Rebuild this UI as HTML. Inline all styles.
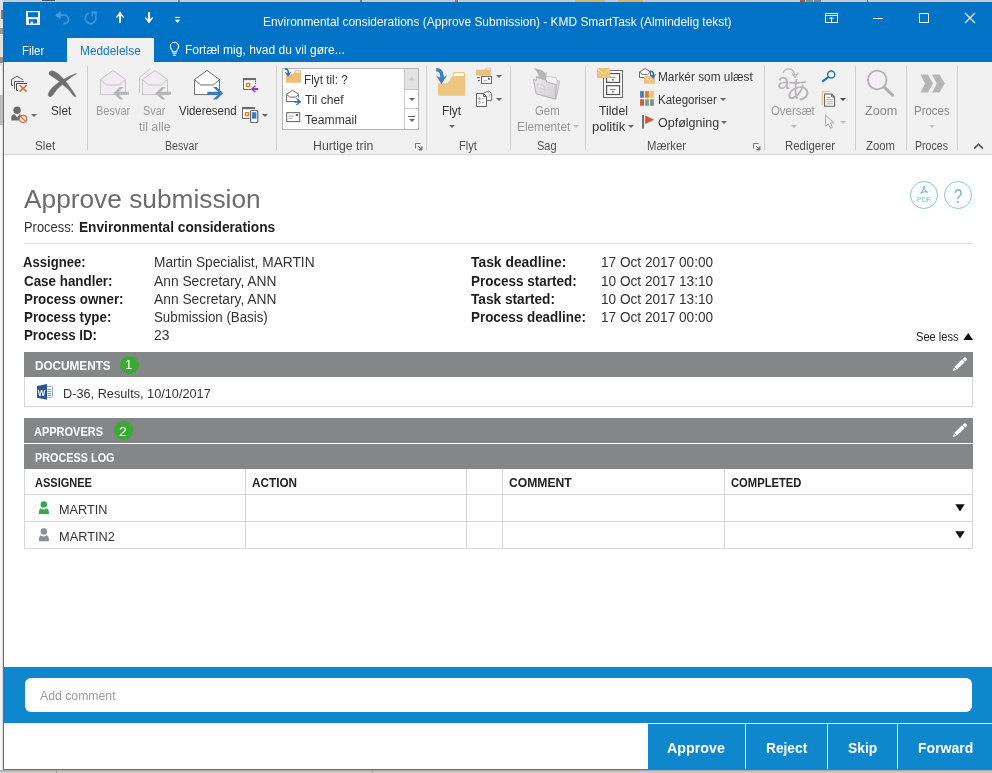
<!DOCTYPE html>
<html lang="en">
<head>
<meta charset="utf-8">
<title>Environmental considerations (Approve Submission) - KMD SmartTask</title>
<style>
*{box-sizing:border-box;margin:0;padding:0}
html,body{width:992px;height:773px;overflow:hidden;background:#d6d6d6}
body{position:relative;font-family:"Liberation Sans",sans-serif;font-size:12px;color:#222}
.a{position:absolute}
svg{position:absolute;overflow:visible}
.t{position:absolute;white-space:nowrap;line-height:1;transform-origin:0 0}
.sep{position:absolute;top:66px;width:1px;height:84px;background:#d0d0d0}
.bar{position:absolute;left:24px;width:949px;background:#858688}
.vl{position:absolute;width:1px;background:#d6d6d6}
.hl{position:absolute;height:1px;background:#d6d6d6}
.dd{position:absolute;width:0;height:0;border-left:3px solid transparent;border-right:3px solid transparent;border-top:3px solid #666}
.dd.l{border-top-color:#bdbdbd}
</style>
</head>
<body>
<div id="root" style="position:absolute;left:0;top:0;width:992px;height:773px;will-change:transform">
<!-- desktop behind window -->
<div class="a" style="left:0;top:0;width:992px;height:2px;background:#cbc9c9"></div>
<div class="a" style="left:42px;top:0;width:13px;height:1px;background:#555"></div>
<div class="a" style="left:178px;top:0;width:2px;height:2px;background:#888"></div>
<div class="a" style="left:360px;top:0;width:2px;height:2px;background:#777"></div>
<div class="a" style="left:455px;top:0;width:3px;height:2px;background:#c46a3a"></div>
<div class="a" style="left:575px;top:0;width:30px;height:2px;background:#d9b46a"></div>
<div class="a" style="left:618px;top:0;width:25px;height:2px;background:#d9b46a"></div>
<div class="a" style="left:800px;top:0;width:5px;height:2px;background:#b8522e"></div>
<div class="a" style="left:806px;top:0;width:7px;height:2px;background:#6f9a86"></div>
<div class="a" style="left:814px;top:0;width:7px;height:2px;background:#858585"></div>
<div class="a" style="left:867px;top:0;width:1px;height:2px;background:#555"></div>
<div class="a" style="left:0;top:770px;width:992px;height:3px;background:linear-gradient(#a4a4a4,#c2c2c2 55%,#d2d2d2)"></div>
<div class="a" style="left:0;top:0;width:3px;height:66px;background:#e0e0e0"></div>
<div class="a" style="left:0;top:66px;width:3px;height:704px;background:linear-gradient(to right,#f6f6f6 50%,#cdcdcd)"></div>
<div class="a" style="left:0;top:95px;width:3px;height:30px;background:#bdbdbd"></div>
<div class="a" style="left:1px;top:10px;width:2px;height:9px;background:#7a7a7a"></div>
<div class="a" style="left:0;top:28px;width:3px;height:6px;background:#9a9a9a"></div>
<div class="a" style="left:0;top:57px;width:3px;height:6px;background:#909090"></div>
<div class="a" style="left:56px;top:770px;width:1px;height:3px;background:#9c9c9c"></div>
<div class="a" style="left:372px;top:770px;width:1px;height:3px;background:#9c9c9c"></div>
<!-- window -->
<div class="a" style="left:3px;top:2px;width:989px;height:768px;background:#fff;border-left:1px solid #1883d7;border-bottom:1px solid #1883d7"></div>
<div class="a" style="left:3px;top:2px;width:989px;height:60px;background:#0173c7"></div>
<div class="a" style="left:67px;top:38px;width:87px;height:25px;background:#f1f1f1"></div>
<div class="a" style="left:4px;top:62px;width:988px;height:93px;background:#f1f1f1;border-bottom:1px solid #d4d4d4"></div>
<!-- ribbon separators -->
<div class="sep" style="left:87px"></div>
<div class="sep" style="left:276px"></div>
<div class="sep" style="left:426px"></div>
<div class="sep" style="left:510px"></div>
<div class="sep" style="left:585px"></div>
<div class="sep" style="left:764px"></div>
<div class="sep" style="left:855px"></div>
<div class="sep" style="left:906px"></div>
<div class="sep" style="left:957px"></div>
<!-- quick steps gallery -->
<div class="a" style="left:282px;top:68px;width:137px;height:62px;background:#fff;border:1px solid #b4b4b4"></div>
<div class="a" style="left:404px;top:69px;width:14px;height:21px;background:#e3e3e3;border-left:1px solid #c8c8c8;border-bottom:1px solid #c8c8c8"></div>
<div class="a" style="left:404px;top:90px;width:14px;height:19px;border-left:1px solid #c8c8c8;border-bottom:1px solid #c8c8c8"></div>
<div class="a" style="left:404px;top:109px;width:14px;height:20px;border-left:1px solid #c8c8c8"></div>
<!-- content -->
<div class="hl" style="left:24px;top:243px;width:949px;background:#dddddd"></div>
<div class="bar" style="top:352px;height:25px"></div>
<div class="a" style="left:24px;top:377px;width:949px;height:30px;border:1px solid #d6d6d6;border-top:none"></div>
<div class="bar" style="top:418px;height:25px"></div>
<div class="bar" style="top:444px;height:25px"></div>
<!-- table grid -->
<div class="hl" style="left:24px;top:494px;width:949px"></div>
<div class="hl" style="left:24px;top:521px;width:949px"></div>
<div class="hl" style="left:24px;top:548px;width:949px"></div>
<div class="vl" style="left:24px;top:469px;height:80px"></div>
<div class="vl" style="left:245px;top:469px;height:80px"></div>
<div class="vl" style="left:466px;top:469px;height:80px"></div>
<div class="vl" style="left:502px;top:469px;height:80px"></div>
<div class="vl" style="left:724px;top:469px;height:80px"></div>
<div class="vl" style="left:972px;top:469px;height:80px"></div>
<!-- badges -->
<div class="a" style="left:120.200px;top:355.800px;width:18.500px;height:18.500px;border-radius:50%;background:#3aaa35"></div>
<div class="a" style="left:114px;top:421.300px;width:18.500px;height:18.500px;border-radius:50%;background:#3aaa35"></div>
<!-- bottom -->
<div class="a" style="left:4px;top:667px;width:988px;height:102px;background:#0f87cd"></div>
<div class="a" style="left:25px;top:678px;width:947px;height:34px;background:#fff;border-radius:6px"></div>
<div class="a" style="left:4px;top:723px;width:644px;height:46px;background:#fff"></div>
<div class="a" style="left:648px;top:723px;width:344px;height:1px;background:#fff"></div>
<div class="a" style="left:745px;top:723px;width:1px;height:46px;background:#fff"></div>
<div class="a" style="left:827px;top:723px;width:1px;height:46px;background:#fff"></div>
<div class="a" style="left:897px;top:723px;width:1px;height:46px;background:#fff"></div>

<!-- icons -->
<!-- title bar icons -->
<svg style="left:26px;top:11px" width="14" height="14" viewBox="26 11 14 14"><rect x="26" y="11" width="14" height="13.900" fill="#fff"/><rect x="28" y="12.200" width="10" height="5" fill="#0173c7"/><rect x="28.800" y="19.200" width="8.400" height="4.300" fill="#0173c7"/><rect x="30.600" y="21.600" width="2.300" height="2" fill="#fff"/></svg>
<svg style="left:54px;top:10px" width="16" height="15" viewBox="0 0 16 15"><path d="M2 5.2H10.2a4.2 4.2 0 0 1 0 8.4H9.2" fill="none" stroke="#4398de" stroke-width="1.8"/><path d="M.9 5.2L6.6 1v8.4z" fill="#4398de"/></svg>
<svg style="left:84px;top:10px" width="14" height="15" viewBox="0 0 14 15"><path d="M5 3.2A5.3 5.3 0 1 0 11.2 5.6" fill="none" stroke="#3d94dc" stroke-width="1.8"/><path d="M7.6 1.2h5.2v5.2z" fill="#3d94dc"/><path d="M8.2 1.8v4.6" stroke="#3d94dc" stroke-width="1.6"/></svg>
<svg style="left:115px;top:11px" width="10" height="13" viewBox="0 0 10 13"><path d="M5 1.5V12" stroke="#fff" stroke-width="2"/><path d="M5 .6L9.2 6.2 8 6.8 5 3.6 2 6.8.8 6.2z" fill="#fff"/></svg>
<svg style="left:144px;top:11px" width="10" height="13" viewBox="0 0 10 13"><path d="M5 1V11.5" stroke="#fff" stroke-width="2"/><path d="M5 12.4L9.2 6.8 8 6.2 5 9.4 2 6.2.8 6.8z" fill="#fff"/></svg>
<svg style="left:174px;top:16px" width="7" height="8" viewBox="0 0 7 8"><path d="M1 1.4h5" stroke="#fff" stroke-width="1"/><path d="M.8 3.8h5.4L3.5 7z" fill="#fff"/></svg>
<!-- lightbulb -->
<svg style="left:169px;top:41px" width="12" height="16" viewBox="169 41 12 16"><path d="M172.400 51.600C172.400 49.300 170.300 48.900 170.300 46.500a4.200 4.200 0 0 1 8.400 0C178.700 48.900 176.600 49.300 176.600 51.600Z" fill="none" stroke="#fff" stroke-width="1.100"/><path d="M172.300 53.300h4.400M172.900 55.300h3.200" stroke="#fff" stroke-width="1.100"/></svg>
<!-- window controls -->
<svg style="left:825px;top:13px" width="13" height="10" viewBox="0 0 13 10"><rect x=".5" y=".5" width="12" height="9" fill="none" stroke="#fff"/><path d="M.5 2.500h12M6.500 9V4M4.500 6l2-2 2 2" fill="none" stroke="#fff"/></svg>
<div class="a" style="left:873px;top:18px;width:10px;height:1px;background:#fff"></div>
<div class="a" style="left:919px;top:13px;width:10px;height:10px;border:1px solid #fff"></div>
<svg style="left:965px;top:13px" width="10" height="10" viewBox="0 0 10 10"><path d="M0 0l10 10M10 0L0 10" stroke="#fff" stroke-width="1.100"/></svg>
<!-- Slet group -->
<svg style="left:10px;top:75px" width="18" height="18" viewBox="10 75 18 18"><path d="M13.100 85.500H11.500V79.500L17.100 76.200L22.900 79.700" fill="none" stroke="#5e5e5e" stroke-width="1"/><path d="M14.500 88.800V81.500H24" fill="none" stroke="#5e5e5e" stroke-width="1"/><path d="M18 90.500H16.500V83.500H27" fill="none" stroke="#4a4a4a" stroke-width="1"/><path d="M19.600 85.300L26.600 91.600M26.600 85.300L19.600 91.600" stroke="#e0673a" stroke-width="1.500"/></svg>
<svg style="left:10px;top:106px" width="18" height="18" viewBox="10 106 18 18"><circle cx="17.100" cy="110.300" r="3.700" fill="#6a6a6a"/><path d="M11.300 120.600V117.500Q11.300 114.600 14.600 114.300L17.100 117.500L19.600 114.300Q20.600 114.400 21 115L19 120.600Z" fill="#6a6a6a"/><circle cx="23.100" cy="118.900" r="3.500" fill="#f3efee" stroke="#e0673a" stroke-width="1.200"/><path d="M20.700 116.500L25.500 121.300" stroke="#e0673a" stroke-width="1.200"/></svg>
<div class="dd" style="left:31px;top:114px"></div>
<svg style="left:46px;top:68px" width="32" height="31" viewBox="46 68 32 31"><path d="M49.100 72.300Q50.500 70.200 53.300 70.900Q57 72.600 59.400 74.850L63.600 79L68.200 84.600L72.900 91.150L76.300 96.700L73.800 96.300L69.200 90.200L62.600 84.600L58 80.400L53.300 77.200L49.700 75Q48.500 73.800 49.100 72.300Z" fill="#707070" stroke="#707070" stroke-width=".4" stroke-linejoin="round"/><path d="M76.300 73.400L70.100 75.800L63.600 79.300L58 82.800L52.400 87.400Q49.500 90.500 48.300 93.500Q47.600 95.600 49 96.500Q50.300 97.200 51.600 96.300L53.300 94.400L57 89.300L62.200 84.600L66.400 80.900L71.500 76.900L76.300 74.100Z" fill="#707070" stroke="#707070" stroke-width=".4" stroke-linejoin="round"/></svg>
<!-- Besvar group -->
<svg style="left:99px;top:69px" width="32" height="32" viewBox="99 69 32 32"><path d="M100.500 94.600V79.500L113 70.500L125.500 79.500V94.600Z" fill="#f1ecf1" stroke="#c6c4c6" stroke-width="1"/><path d="M100.500 79.500L106.700 85H119.300L125.500 79.500" fill="none" stroke="#c6c4c6" stroke-width="1"/><path d="M113.400 93.300L120 87h3.600l-5 4.800H129v3H118.600l5 4.800H120z" fill="#b6b6b6"/></svg>
<svg style="left:138px;top:67px" width="34" height="34" viewBox="138 67 34 34"><path d="M139.500 92.600V77.600L150.500 68.500" fill="none" stroke="#c6c4c6" stroke-width="1"/><path d="M142.500 94.600V79.500L155 70.500L167.500 79.500V94.600Z" fill="#f1ecf1" stroke="#c6c4c6" stroke-width="1"/><path d="M142.500 79.500L148.700 85H161.300L167.500 79.500" fill="none" stroke="#c6c4c6" stroke-width="1"/><path d="M155.400 93.300L162 87h3.600l-5 4.800H171v3H160.600l5 4.800H162z" fill="#b6b6b6"/></svg>
<svg style="left:193px;top:69px" width="32" height="32" viewBox="193 69 32 32"><path d="M194.500 94.600V79.500L207 70.500L219.500 79.500V94.600Z" fill="#fff" stroke="#6e6e6e" stroke-width="1"/><path d="M194.500 79.500L200.700 85H213.300L219.500 79.500" fill="none" stroke="#6e6e6e" stroke-width="1"/><path d="M223.200 93.300L216.600 87H213l5 4.800H207.300v3H218l-5 4.800h3.600z" fill="#3b7cc0"/></svg>
<svg style="left:242px;top:77px" width="18" height="16" viewBox="242 77 18 16"><rect x="243.500" y="79" width="12" height="10.500" fill="#fff" stroke="#6a6a6a" stroke-width="1" stroke-dasharray="1.500 1.200"/><path d="M243 79.100H256" stroke="#6a6a6a" stroke-width="2.200"/><path d="M243.500 80V89.500H250" fill="none" stroke="#6a6a6a" stroke-width="1"/><rect x="246.500" y="83.400" width="3.200" height="3.200" fill="#fff" stroke="#e8791c" stroke-width="1.300"/><rect x="251" y="84" width="6" height="8" fill="#f1f1f1"/><path d="M250.900 89L254.400 85.800h2l-2.400 2.300H258.200v1.800H254l2.400 2.300h-2z" fill="#8b3fa8"/></svg>
<svg style="left:241px;top:106px" width="18" height="18" viewBox="241 106 18 18"><rect x="242.500" y="108" width="12" height="10.500" fill="#fff" stroke="#6a6a6a" stroke-width="1" stroke-dasharray="1.500 1.200"/><path d="M242 108.100H255" stroke="#6a6a6a" stroke-width="2.200"/><path d="M242.500 109V118.500H250" fill="none" stroke="#6a6a6a" stroke-width="1"/><rect x="245.500" y="112.700" width="3" height="3" fill="#fff" stroke="#e8791c" stroke-width="1.300"/><rect x="249.500" y="109.500" width="9" height="13.600" rx="1.200" fill="#f1f1f1"/><rect x="250.600" y="110.500" width="7.200" height="12" rx="1" fill="#fff" stroke="#6a6a6a" stroke-width="1.200"/><rect x="252" y="112.200" width="4.400" height="6.500" fill="#3b7cc0"/></svg>
<div class="dd" style="left:261.500px;top:114px"></div>
<!-- quick steps -->
<svg style="left:284px;top:68px" width="18" height="16" viewBox="284 68 18 16"><path d="M286 82.800V75.200L293.800 73.400L294.800 70.300H301V82.800Z" fill="#ebc177"/><path d="M295.800 71.200H300.200V72.400H295.400Z" fill="#fff"/><path d="M285 68.800C288 69 288.700 71 288.300 74.500" fill="none" stroke="#2f6fb5" stroke-width="1.700"/><path d="M285.200 72.400L288.100 76.400L290.900 72.200L288.300 73.700Z" fill="#2f6fb5" stroke="#2f6fb5" stroke-width=".5"/></svg>
<svg style="left:285px;top:89px" width="18" height="17" viewBox="285 89 18 17"><path d="M294.500 101.500H286.600V94.200L292.600 90.400L298.700 94.200V97.500" fill="none" stroke="#6a6a6a" stroke-width="1"/><path d="M286.600 94.200L289.600 97.100H295.700L298.700 94.200" fill="none" stroke="#6a6a6a" stroke-width="1"/><path d="M301.200 101.800L297.600 98.500h-1.900l2.400 2.400H294.200v1.800H298.100l-2.400 2.400h1.900z" fill="#2f6fb5"/></svg>
<svg style="left:285px;top:111px" width="17" height="12" viewBox="285 111 17 12"><rect x="286.700" y="112.700" width="13" height="8.900" fill="#fff" stroke="#606060" stroke-width="1"/><path d="M288.200 116.100H293.700M288.200 118.300H292.700" stroke="#9a9a9a" stroke-width=".8"/><rect x="295.800" y="114" width="2.200" height="2" fill="#2f6fb5"/></svg>
<!-- gallery scroll arrows -->
<svg style="left:408px;top:76px" width="7" height="5" viewBox="0 0 7 5"><path d="M.5 4.200L3.500 .8L6.500 4.200Z" fill="#c6c6c6"/></svg>
<div class="dd" style="left:408.500px;top:98px"></div>
<div class="a" style="left:408px;top:115.500px;width:7px;height:1px;background:#666"></div>
<div class="dd" style="left:408.500px;top:118.500px"></div>
<!-- dialog launchers -->
<svg style="left:415px;top:143px" width="8" height="8" viewBox="0 0 8 8"><path d="M.5 5.500V.5H5.500" fill="none" stroke="#777" stroke-width="1"/><path d="M3 3L6.500 6.500M7 3.600V7H3.600Z" stroke="#777" stroke-width="1" fill="#777"/></svg>
<svg style="left:753px;top:143px" width="8" height="8" viewBox="0 0 8 8"><path d="M.5 5.500V.5H5.500" fill="none" stroke="#777" stroke-width="1"/><path d="M3 3L6.500 6.500M7 3.600V7H3.600Z" stroke="#777" stroke-width="1" fill="#777"/></svg>
<!-- Flyt group -->
<svg style="left:434px;top:66px" width="33" height="32" viewBox="434 66 33 32"><path d="M438 95.800V83.200H447.600L453.400 74.600V73.200Q453.400 72 454.600 72H463.900Q465.100 72 465.100 73.200V95.800Z" fill="#edc77f"/><path d="M454.800 73.200H462.900Q463.800 73.200 463.800 74.300V75.900H453.700Z" fill="#fff"/><path d="M436.300 69.800C441.500 70 442.600 74 441.700 80" fill="none" stroke="#3f7fbf" stroke-width="3.600"/><path d="M436 75.600L441.500 84.200L447.200 75L441.700 78.600Z" fill="#3f7fbf"/></svg>
<svg style="left:475px;top:67px" width="18" height="18" viewBox="475 67 18 18"><path d="M476 75.600V69.800H484.500L485.800 67.800H490.900V75.600Z" fill="#ebc177"/><path d="M486.400 68.600H490V69.500H486Z" fill="#fff"/><rect x="481.500" y="76.400" width="10" height="7" fill="#fff" stroke="#666" stroke-width="1"/><rect x="487.900" y="77.800" width="2" height="2" fill="#2f6fb5"/><path d="M483.400 80.600H487" stroke="#999" stroke-width=".8"/><path d="M477 77.700H479.800M478 80.500H479.800" stroke="#666" stroke-width="1"/></svg>
<div class="dd" style="left:495.500px;top:75px"></div>
<svg style="left:475px;top:90px" width="18" height="18" viewBox="475 90 18 18"><path d="M484 93L488.500 91L491.700 93.400V100.500H487" fill="none" stroke="#777" stroke-width="1"/><path d="M488.500 91V93M491.500 93.500L489 96.500" stroke="#999" stroke-width=".8" fill="none"/><path d="M476.500 93.500H483.500L486.500 96.500V106.500H476.500Z" fill="#fff" stroke="#606060" stroke-width="1"/><path d="M483.500 93.500V96.500H486.500" fill="none" stroke="#606060" stroke-width="1"/><circle cx="479.400" cy="98.600" r="1" fill="#aaa" stroke="#888" stroke-width=".5"/><circle cx="479.400" cy="102.600" r="1" fill="#fff" stroke="#888" stroke-width=".6"/><path d="M481.800 98.600H484.500M481.800 102.600H484.500" stroke="#999" stroke-width=".8"/></svg>
<div class="dd" style="left:495.500px;top:98px"></div>
<div class="dd" style="left:448.500px;top:125px"></div>
<!-- Gem elementet (disabled) -->
<svg style="left:530px;top:66px" width="32" height="35" viewBox="530 66 32 35"><defs><linearGradient id="gf" x1="0" y1="0" x2="1" y2="1"><stop offset="0" stop-color="#ebe8eb"/><stop offset="1" stop-color="#d3d1d3"/></linearGradient></defs><path d="M546.500 76.200L556 77.600L557 80.500L555.800 98.500L541 92Z" fill="#f6f2f6" stroke="#c4c2c4" stroke-width=".8"/><path d="M556.800 80.300L559.700 81.200L555.800 99" fill="#dcdadc" stroke="#b4b4b4" stroke-width=".8"/><path d="M533.400 79.200L536.400 80.400V76.400L546.500 80.500V82L556.200 84.600L555.600 99.200L536.200 93.800Z" fill="url(#gf)" stroke="#b2b2b2" stroke-width="1"/><path d="M537.200 84.200L543.800 85.600L544.600 89.600L538 88Z" fill="#e9e6e9" stroke="#c8c6c8" stroke-width=".7"/><path d="M533.200 68.200C539 68.500 543 70.500 545.200 73.200L546.600 71.600L546.200 80.600L537 78L539 76.300C538 73 536 70 533.200 68.200Z" fill="#b8b6b8"/></svg>
<div class="dd l" style="left:572.500px;top:125px"></div>
<!-- Tildel politik -->
<svg style="left:596px;top:67px" width="28" height="32" viewBox="596 67 28 32"><rect x="603.500" y="70.500" width="19" height="27" fill="#fafafa" stroke="#6a6a6a" stroke-width="1"/><rect x="606.600" y="73.600" width="13" height="8.800" fill="#fff" stroke="#555" stroke-width="1.200"/><rect x="606.600" y="85.700" width="13" height="8.800" fill="#fff" stroke="#555" stroke-width="1.200"/><path d="M610 77.300H615.700M610 89.400H615.700" stroke="#777" stroke-width=".9"/><rect x="612" y="79" width="1.800" height="1.600" fill="#777"/><rect x="612" y="91.100" width="1.800" height="1.600" fill="#777"/><rect x="597" y="68" width="13.200" height="10" fill="#ecc377"/><path d="M597 68.300L603.600 74L610.200 68.300" fill="none" stroke="#f8e6c4" stroke-width="1"/></svg>
<div class="dd" style="left:627.800px;top:125px"></div>
<!-- Marker som ulaest -->
<svg style="left:638px;top:67px" width="18" height="18" viewBox="638 67 18 18"><path d="M639.500 77.500V72L645 68.500L650.500 72V77.500Z" fill="#fff" stroke="#6a6a6a" stroke-width="1"/><path d="M639.500 72L642.500 74.600H647.500L650.500 72" fill="none" stroke="#6a6a6a" stroke-width="1"/><rect x="644" y="76" width="11" height="7.800" fill="#ecc377"/><path d="M644 76.300L649.500 80.600L655 76.300" fill="none" stroke="#f8e6c4" stroke-width=".9"/><path d="M649.800 71.300C653 71 653.800 73 653.300 76" fill="none" stroke="#2f6fb5" stroke-width="1.700"/><path d="M650.400 74.400L653.100 78.700L655.900 74.200L653.300 75.700Z" fill="#2f6fb5" stroke="#2f6fb5" stroke-width=".5"/></svg>
<!-- Kategoriser -->
<svg style="left:640px;top:91px" width="14" height="15" viewBox="640 91 14 15"><rect x="640.100" y="91.100" width="3.800" height="6.700" fill="#4a7ebb"/><rect x="645.100" y="91.100" width="3.800" height="6.700" fill="#e8791c"/><rect x="650.100" y="91.100" width="3.800" height="6.700" fill="#ecc377"/><rect x="640.100" y="99.200" width="3.800" height="6.600" fill="#d9552f"/><rect x="645.100" y="99.200" width="3.800" height="6.600" fill="#6fa88c"/><rect x="650.100" y="99.200" width="3.800" height="6.600" fill="#8a8a8a"/></svg>
<div class="dd" style="left:720px;top:98px"></div>
<!-- Opfolgning -->
<svg style="left:641px;top:114px" width="14" height="15" viewBox="641 114 14 15"><rect x="642.100" y="115" width="1.800" height="13.600" fill="#666"/><path d="M645.100 115.400L654.200 119.700L645.100 124Z" fill="#d9552f"/></svg>
<div class="dd" style="left:721.400px;top:121px"></div>
<!-- Oversaet (disabled) -->
<svg style="left:776px;top:66px" width="34" height="36" viewBox="776 66 34 36"><path d="M783.200 73.200C784.500 67.600 793 66.600 795.200 75.600" fill="none" stroke="#b6b4b6" stroke-width="1.300"/><path d="M791.800 73.200L795.300 77L798.200 72.600" fill="none" stroke="#b6b4b6" stroke-width="1.300"/><text x="777.200" y="88.600" font-family="'Liberation Sans',sans-serif" font-size="22" fill="#b6b4b6">a</text><text x="785.800" y="98.800" font-family="'Noto Sans CJK JP','IPAGothic',sans-serif" font-size="25" fill="#b6b4b6">あ</text></svg>
<div class="dd l" style="left:790.600px;top:125px"></div>
<!-- find -->
<svg style="left:821px;top:69px" width="16" height="14" viewBox="821 69 16 14"><path d="M828 77.400L823 81.100" stroke="#2f6fb5" stroke-width="2.200" stroke-linecap="round"/><circle cx="831.200" cy="74.600" r="3.500" fill="#fff" stroke="#2f6fb5" stroke-width="1.500"/></svg>
<!-- doc -->
<svg style="left:821px;top:90px" width="16" height="18" viewBox="821 90 16 18"><path d="M829.900 91.600H822.300V105" fill="none" stroke="#ecc377" stroke-width="1.200"/><path d="M824.600 94H831.600L834.500 96.900V106.200H824.600Z" fill="#fff" stroke="#606060" stroke-width="1.100"/><path d="M831.600 94V96.900H834.500" fill="none" stroke="#606060" stroke-width=".9"/><path d="M826.600 97.500H830.500M826.600 99.600H832.600M826.600 101.700H832.600M826.600 103.800H832.600" stroke="#999" stroke-width=".8"/></svg>
<div class="dd" style="left:840.400px;top:98px;border-top-color:#444"></div>
<!-- cursor (disabled) -->
<svg style="left:824px;top:114px" width="11" height="16" viewBox="824 114 11 16"><path d="M825.600 115.200V126.200L828.200 123.900L830.400 128.400L832.400 127.400L830.300 123.100L833.700 122.800Z" fill="#f3eef3" stroke="#a8a6a8" stroke-width="1"/></svg>
<div class="dd l" style="left:840.400px;top:121px"></div>
<!-- Zoom -->
<svg style="left:865px;top:68px" width="31" height="31" viewBox="865 68 31 31"><path d="M884.200 87.200L892.600 95.200" stroke="#b2b0b2" stroke-width="3" stroke-linecap="round"/><circle cx="877.200" cy="80" r="9.300" fill="#f4eff4" stroke="#b2b0b2" stroke-width="1.800"/></svg>
<!-- Proces -->
<svg style="left:919px;top:73px" width="27" height="21" viewBox="919 73 27 21"><path d="M920.500 74.600H928L933 83.500L928 92.500H920.500L925 83.500Z" fill="#b6b6b6"/><path d="M932 74.600H939.500L944.800 83.500L939.500 92.500H932L936.800 83.500Z" fill="#b6b6b6"/></svg>
<div class="dd l" style="left:928.500px;top:125px"></div>
<!-- collapse ribbon -->
<svg style="left:973px;top:142px" width="11" height="8" viewBox="0 0 11 8"><path d="M1.200 6.600L5.500 2.200L9.800 6.600" fill="none" stroke="#555" stroke-width="1.700"/></svg>
<!-- content icons -->
<svg style="left:910px;top:181px" width="64" height="29" viewBox="910 181 64 29"><circle cx="924" cy="195" r="13.500" fill="none" stroke="#86c4ee" stroke-width="1"/><circle cx="958" cy="195" r="13.500" fill="none" stroke="#86c4ee" stroke-width="1"/><path d="M924.200 186.200C923.400 188.500 924.600 190.400 927.600 192.200C925 191.400 922.800 191.800 920.400 193.400C922.600 191.400 923.800 189 924.200 186.200Z" fill="none" stroke="#5aa9e0" stroke-width=".9"/></svg>
<svg style="left:962px;top:332px" width="12" height="9" viewBox="0 0 12 9"><path d="M1.300 8L6.200 1L11.100 8Z" fill="#111"/></svg>
<svg style="left:950px;top:355px" width="19" height="18" viewBox="950 355 19 18"><g transform="rotate(-44 952.800 371)" fill="#fff"><path d="M952.800 371L956.300 369.100V372.900Z"/><rect x="956.900" y="369.100" width="10.800" height="3.800"/><path d="M968.300 369.100H970Q971.600 369.100 971.600 371Q971.600 372.900 970 372.900H968.300Z"/></g></svg>
<svg style="left:950px;top:421px" width="19" height="18" viewBox="950 355 19 18"><g transform="rotate(-44 952.800 371)" fill="#fff"><path d="M952.800 371L956.300 369.100V372.900Z"/><rect x="956.900" y="369.100" width="10.800" height="3.800"/><path d="M968.300 369.100H970Q971.600 369.100 971.600 371Q971.600 372.900 970 372.900H968.300Z"/></g></svg>
<!-- word doc icon -->
<svg style="left:36px;top:383px" width="18" height="18" viewBox="36 383 18 18"><rect x="46.500" y="386.600" width="6" height="10.800" rx=".8" fill="#fff" stroke="#7e9bc8" stroke-width=".9"/><path d="M47.400 389.500H51.200M47.400 391.500H51.200M47.400 393.500H51.200M47.400 395.500H51.200" stroke="#5f82b8" stroke-width=".8"/><path d="M37 386L47 384V399.800L37 397.800Z" fill="#2a569a"/><text x="37.700" y="395.600" font-family="'Liberation Sans',sans-serif" font-weight="bold" font-size="8.500" fill="#fff" textLength="7.600" lengthAdjust="spacingAndGlyphs">W</text></svg>
<!-- people -->
<svg style="left:38px;top:500px" width="12" height="15" viewBox="38 500 12 15"><path d="M38.900 514.100V512Q38.900 509.300 40.800 508.200Q43.800 510.600 46.800 508.200Q48.900 509.300 48.900 512V514.100Z" fill="#2fa84f"/><circle cx="43.800" cy="504.400" r="3.200" fill="#2fa84f"/></svg>
<svg style="left:38px;top:527px" width="12" height="15" viewBox="38 527 12 15"><path d="M38.900 541.200V539.100Q38.900 536.400 40.800 535.300Q43.800 537.700 46.800 535.300Q48.900 536.400 48.900 539.100V541.200Z" fill="#8b8e93"/><circle cx="43.800" cy="531.500" r="3.200" fill="#8b8e93"/></svg>
<!-- completed markers -->
<svg style="left:955px;top:504px" width="10" height="8" viewBox="0 0 10 8"><path d="M.3 .3H9.700L5 7.400Z" fill="#111"/></svg>
<svg style="left:955px;top:531px" width="10" height="8" viewBox="0 0 10 8"><path d="M.3 .3H9.700L5 7.400Z" fill="#111"/></svg>

<!-- text -->
<div class="t" style="left:262.63px;top:16.00px;font-size:12px;color:#ffffff;transform:scaleX(0.9936);">Environmental considerations (Approve Submission) - KMD SmartTask (Almindelig tekst)</div>
<div class="t" style="left:21.66px;top:45.00px;font-size:12px;color:#ffffff;transform:scaleX(0.9551);">Filer</div>
<div class="t" style="left:79.63px;top:45.00px;font-size:12px;color:#1274cc;transform:scaleX(0.9896);">Meddelelse</div>
<div class="t" style="left:185.12px;top:44.00px;font-size:12px;color:#ffffff;transform:scaleX(1.0024);">Fortæl mig, hvad du vil gøre...</div>
<div class="t" style="left:51.15px;top:105.00px;font-size:12px;color:#363636;transform:scaleX(0.9744);">Slet</div>
<div class="t" style="left:35.15px;top:140.00px;font-size:12px;color:#505050;transform:scaleX(0.9744);">Slet</div>
<div class="t" style="left:95.95px;top:105.00px;font-size:12px;color:#999999;transform:scaleX(0.9172);">Besvar</div>
<div class="t" style="left:143.46px;top:105.00px;font-size:12px;color:#999999;transform:scaleX(0.9053);">Svar</div>
<div class="t" style="left:138.99px;top:121.00px;font-size:12px;color:#999999;transform:scaleX(1.0293);">til alle</div>
<div class="t" style="left:178.50px;top:105.00px;font-size:12px;color:#363636;transform:scaleX(0.9537);">Videresend</div>
<div class="t" style="left:164.98px;top:140.00px;font-size:12px;color:#505050;transform:scaleX(0.8828);">Besvar</div>
<div class="t" style="left:304.39px;top:74.00px;font-size:12px;color:#363636;transform:scaleX(0.9798);">Flyt til: ?</div>
<div class="t" style="left:305.12px;top:94.00px;font-size:12px;color:#363636;transform:scaleX(1.0065);">Til chef</div>
<div class="t" style="left:305.12px;top:114.00px;font-size:12px;color:#363636;transform:scaleX(1.0099);">Teammail</div>
<div class="t" style="left:312.85px;top:140.00px;font-size:12px;color:#505050;transform:scaleX(1.0262);">Hurtige trin</div>
<div class="t" style="left:441.89px;top:105.00px;font-size:12px;color:#363636;transform:scaleX(0.9863);">Flyt</div>
<div class="t" style="left:459.20px;top:140.00px;font-size:12px;color:#505050;transform:scaleX(0.9178);">Flyt</div>
<div class="t" style="left:535.16px;top:105.00px;font-size:12px;color:#999999;transform:scaleX(0.9482);">Gem</div>
<div class="t" style="left:516.64px;top:121.00px;font-size:12px;color:#999999;transform:scaleX(0.9858);">Elementet</div>
<div class="t" style="left:537.45px;top:140.00px;font-size:12px;color:#505050;transform:scaleX(0.9175);">Sag</div>
<div class="t" style="left:598.62px;top:105.00px;font-size:12px;color:#363636;transform:scaleX(1.0275);">Tildel</div>
<div class="t" style="left:591.94px;top:121.00px;font-size:12px;color:#363636;transform:scaleX(1.0840);">politik</div>
<div class="t" style="left:657.89px;top:71.00px;font-size:12px;color:#363636;transform:scaleX(0.9868);">Markér som ulæst</div>
<div class="t" style="left:657.91px;top:94.00px;font-size:12px;color:#363636;transform:scaleX(0.9585);">Kategoriser</div>
<div class="t" style="left:658.10px;top:117.00px;font-size:12px;color:#363636;transform:scaleX(1.0414);">Opfølgning</div>
<div class="t" style="left:647.17px;top:140.00px;font-size:12px;color:#505050;transform:scaleX(0.9441);">Mærker</div>
<div class="t" style="left:771.41px;top:105.00px;font-size:12px;color:#999999;transform:scaleX(0.9503);">Oversæt</div>
<div class="t" style="left:784.77px;top:140.00px;font-size:12px;color:#505050;transform:scaleX(0.9498);">Redigerer</div>
<div class="t" style="left:864.74px;top:105.00px;font-size:12px;color:#8a8a8a;transform:scaleX(1.0544);">Zoom</div>
<div class="t" style="left:866.01px;top:140.00px;font-size:12px;color:#505050;transform:scaleX(0.9423);">Zoom</div>
<div class="t" style="left:913.66px;top:105.00px;font-size:12px;color:#8a8a8a;transform:scaleX(0.9550);">Proces</div>
<div class="t" style="left:914.73px;top:140.00px;font-size:12px;color:#505050;transform:scaleX(0.8830);">Proces</div>
<div class="t" style="left:24.18px;top:186.00px;font-size:26.5px;color:#6c6c6c;transform:scaleX(0.9916);">Approve submission</div>
<div class="t" style="left:24.08px;top:220.00px;font-size:14px;color:#333;transform:scaleX(0.9209);">Process:</div>
<div class="t" style="left:78.64px;top:220.00px;font-size:14px;color:#1e1e1e;font-weight:bold;transform:scaleX(0.9772);">Environmental considerations</div>
<div class="t" style="left:23.33px;top:255.00px;font-size:14px;color:#1e1e1e;font-weight:bold;transform:scaleX(0.9349);">Assignee:</div>
<div class="t" style="left:23.90px;top:274.00px;font-size:14px;color:#1e1e1e;font-weight:bold;transform:scaleX(0.9559);">Case handler:</div>
<div class="t" style="left:23.66px;top:292.00px;font-size:14px;color:#1e1e1e;font-weight:bold;transform:scaleX(0.9547);">Process owner:</div>
<div class="t" style="left:23.67px;top:310.00px;font-size:14px;color:#1e1e1e;font-weight:bold;transform:scaleX(0.9513);">Process type:</div>
<div class="t" style="left:23.67px;top:328.00px;font-size:14px;color:#1e1e1e;font-weight:bold;transform:scaleX(0.9482);">Process ID:</div>
<div class="t" style="left:153.82px;top:255.00px;font-size:14px;color:#333333;transform:scaleX(0.9796);">Martin Specialist, MARTIN</div>
<div class="t" style="left:153.98px;top:274.00px;font-size:14px;color:#333333;transform:scaleX(0.9860);">Ann Secretary, ANN</div>
<div class="t" style="left:153.98px;top:292.00px;font-size:14px;color:#333333;transform:scaleX(0.9860);">Ann Secretary, ANN</div>
<div class="t" style="left:153.97px;top:310.00px;font-size:14px;color:#333333;transform:scaleX(0.9497);">Submission (Basis)</div>
<div class="t" style="left:154.06px;top:328.00px;font-size:14px;color:#333333;transform:scaleX(0.9895);">23</div>
<div class="t" style="left:471.30px;top:255.00px;font-size:14px;color:#1e1e1e;font-weight:bold;transform:scaleX(0.9905);">Task deadline:</div>
<div class="t" style="left:470.86px;top:274.00px;font-size:14px;color:#1e1e1e;font-weight:bold;transform:scaleX(0.9628);">Process started:</div>
<div class="t" style="left:471.30px;top:292.00px;font-size:14px;color:#1e1e1e;font-weight:bold;transform:scaleX(0.9753);">Task started:</div>
<div class="t" style="left:470.86px;top:310.00px;font-size:14px;color:#1e1e1e;font-weight:bold;transform:scaleX(0.9586);">Process deadline:</div>
<div class="t" style="left:600.93px;top:255.00px;font-size:14px;color:#333333;transform:scaleX(0.9730);">17 Oct 2017 00:00</div>
<div class="t" style="left:600.93px;top:274.00px;font-size:14px;color:#333333;transform:scaleX(0.9730);">10 Oct 2017 13:10</div>
<div class="t" style="left:600.93px;top:292.00px;font-size:14px;color:#333333;transform:scaleX(0.9730);">10 Oct 2017 13:10</div>
<div class="t" style="left:600.93px;top:310.00px;font-size:14px;color:#333333;transform:scaleX(0.9730);">17 Oct 2017 00:00</div>
<div class="t" style="left:915.79px;top:331.00px;font-size:12px;color:#222;transform:scaleX(0.9251);">See less</div>
<div class="t" style="left:34.77px;top:360.00px;font-size:12px;color:#ffffff;font-weight:bold;transform:scaleX(0.9787);">DOCUMENTS</div>
<div class="t" style="left:125.35px;top:359.00px;font-size:12px;color:#ffffff;transform:scaleX(1.0857);">1</div>
<div class="t" style="left:62.89px;top:387.00px;font-size:13px;color:#333333;transform:scaleX(0.9783);">D-36, Results, 10/10/2017</div>
<div class="t" style="left:34.46px;top:426.00px;font-size:12px;color:#ffffff;font-weight:bold;transform:scaleX(0.9161);">APPROVERS</div>
<div class="t" style="left:119.47px;top:426.00px;font-size:12px;color:#ffffff;transform:scaleX(1.1636);">2</div>
<div class="t" style="left:34.82px;top:452.00px;font-size:12px;color:#ffffff;font-weight:bold;transform:scaleX(0.9033);">PROCESS LOG</div>
<div class="t" style="left:35.21px;top:477.00px;font-size:12px;color:#222;font-weight:bold;transform:scaleX(0.9184);">ASSIGNEE</div>
<div class="t" style="left:252.43px;top:477.00px;font-size:12px;color:#222;font-weight:bold;transform:scaleX(0.9783);">ACTION</div>
<div class="t" style="left:509.09px;top:477.00px;font-size:12px;color:#222;font-weight:bold;transform:scaleX(1.0130);">COMMENT</div>
<div class="t" style="left:731.13px;top:477.00px;font-size:12px;color:#222;font-weight:bold;transform:scaleX(0.9342);">COMPLETED</div>
<div class="t" style="left:58.65px;top:503.00px;font-size:13px;color:#333333;transform:scaleX(0.9765);">MARTIN</div>
<div class="t" style="left:58.64px;top:530.00px;font-size:13px;color:#333333;transform:scaleX(0.9819);">MARTIN2</div>
<div class="t" style="left:40.40px;top:690.00px;font-size:12px;color:#9a9a9a;transform:scaleX(1.0206);">Add comment</div>
<div class="t" style="left:667.19px;top:741.00px;font-size:14px;color:#ffffff;font-weight:bold;transform:scaleX(1.0188);">Approve</div>
<div class="t" style="left:765.84px;top:741.00px;font-size:14px;color:#ffffff;font-weight:bold;transform:scaleX(0.9810);">Reject</div>
<div class="t" style="left:848.08px;top:741.00px;font-size:14px;color:#ffffff;font-weight:bold;transform:scaleX(0.9868);">Skip</div>
<div class="t" style="left:918.02px;top:741.00px;font-size:14px;color:#ffffff;font-weight:bold;transform:scaleX(1.0019);">Forward</div>
<div class="t" style="left:917.49px;top:196.00px;font-size:7px;color:#74b8e8;transform:scaleX(1.0139);">PDF</div>
<div class="t" style="left:954.36px;top:186.00px;font-size:20px;color:#6ab2e6;transform:scaleX(0.7368);">?</div>
</div>
</body>
</html>
